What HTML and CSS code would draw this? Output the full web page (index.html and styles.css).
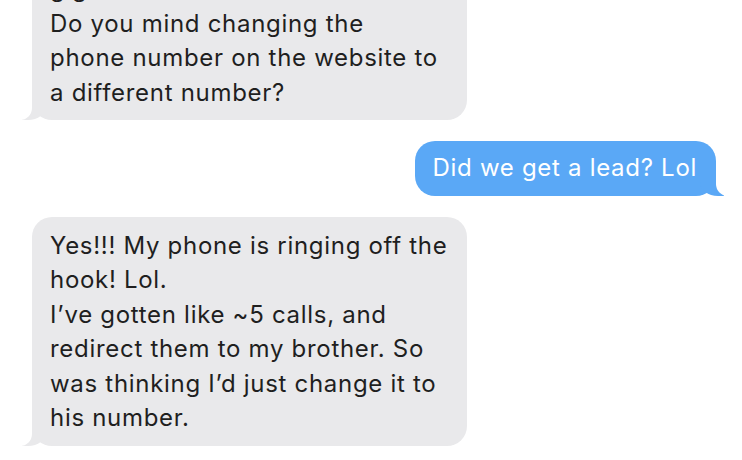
FILE: index.html
```html
<!DOCTYPE html>
<html lang="en">

<head>
    <meta charset="UTF-8">
    <meta name="viewport" content="width=device-width, initial-scale=1.0">
    <title>Messages</title>
    <link rel="stylesheet" href="styles.css">
</head>

<body>
    <div class="thread">
        <div class="bubble them first">gig<br>Do you mind changing the<br>phone number on the website to a different number?</div>
        <div class="bubble me">Did we get a lead? Lol</div>
        <div class="bubble them">Yes!!! My phone is ringing off the hook! Lol.<br>I’ve gotten like ~5 calls, and redirect them to my brother. So was thinking I’d just change it to his number.</div>
    </div>
</body>

</html>
```

FILE: styles.css
```css
body {
    margin: 0;
    background: #fff;
    font-family: Inter, "Noto Sans", sans-serif;
    overflow: hidden;
}

.thread {
    display: flex;
    flex-direction: column;
    gap: 21px;
    padding: 0 26px 0 32px;
}

.bubble {
    position: relative;
    max-width: 399px;
    padding: 12px 18px 10px;
    border-radius: 20px;
    font-size: 24px;
    line-height: 34.5px;
    letter-spacing: 0.7px;
}

.bubble.first {
    margin-top: -40px;
}

.them {
    align-self: flex-start;
    background: #e9e9eb;
    color: #1f1f1f;
}

.me {
    align-self: flex-end;
    background: #5aa8f6;
    color: #fff;
    padding: 10px 19px 10px 18px;
}

/* tails */
.bubble::before,
.bubble::after {
    content: "";
    position: absolute;
    bottom: 0;
    height: 22px;
}

.them::before {
    left: -10px;
    width: 24px;
    background: #e9e9eb;
    border-bottom-right-radius: 18px 14px;
}

.them::after {
    left: -28px;
    width: 28px;
    background: #fff;
    border-bottom-right-radius: 12px;
}

.me::before {
    right: -8px;
    width: 24px;
    background: #5aa8f6;
    border-bottom-left-radius: 18px 14px;
}

.me::after {
    right: -28px;
    width: 28px;
    background: #fff;
    border-bottom-left-radius: 12px;
}
```
